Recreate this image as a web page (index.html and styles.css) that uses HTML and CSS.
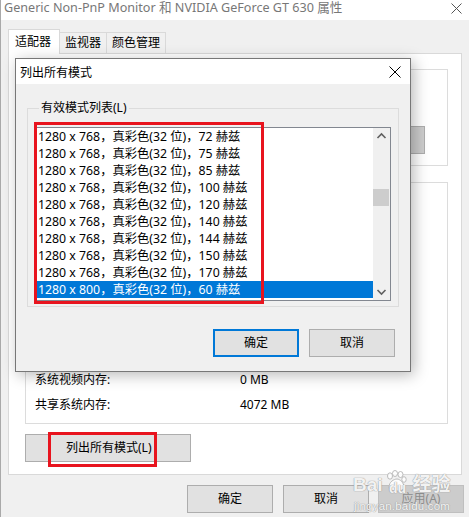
FILE: index.html
```html
<!DOCTYPE html>
<html lang="zh-CN">
<head>
<meta charset="utf-8">
<title>属性</title>
<link rel="stylesheet" href="styles.css">
</head>
<body>
<div class="window">
  <div class="titlebar">
    <span class="title">Generic Non-PnP Monitor 和 NVIDIA GeForce GT 630 属性</span>
    <svg class="close" width="11" height="11" viewBox="0 0 11 11"><path d="M0.5 0.5L10.5 10.5M10.5 0.5L0.5 10.5" stroke="#555" stroke-width="1" fill="none"/></svg>
  </div>
  <div class="tabs">
    <div class="tab active">适配器</div>
    <div class="tab">监视器</div>
    <div class="tab">颜色管理</div>
  </div>
  <div class="panel">
    <div class="group g1">
      <div class="btn small-btn"></div>
    </div>
    <div class="group g2">
      <div class="info-row"><span class="k">系统视频内存:</span><span class="v">0 MB</span></div>
      <div class="info-row"><span class="k">共享系统内存:</span><span class="v">4072 MB</span></div>
    </div>
    <div class="btn list-btn">列出所有模式(L)</div>
  </div>
  <div class="footer">
    <div class="btn">确定</div>
    <div class="btn">取消</div>
    <div class="btn disabled">应用(A)</div>
  </div>

  <div class="watermark">
    <div class="wm-top">Bai<span class="paw"><svg width="22" height="22" viewBox="0 0 22 22"><g fill="rgba(255,255,255,0.85)" stroke="#bbb" stroke-width="1"><ellipse cx="5" cy="6" rx="2.5" ry="3.2"/><ellipse cx="10" cy="3.5" rx="2.5" ry="3"/><ellipse cx="15.5" cy="4.5" rx="2.5" ry="3"/><ellipse cx="19" cy="9.5" rx="2.2" ry="2.8"/><path d="M4 17c0-5 5-8 8-8s7 4 7 8c0 3-3 4-7 4s-8-1-8-4z"/></g></svg><span class="du">du</span></span>经验</div>
    <div class="wm-bottom">jingyan.baidu.com</div>
  </div>

  <div class="dialog">
    <div class="dlg-title">
      <span>列出所有模式</span>
      <svg class="dlg-close" width="12" height="12" viewBox="0 0 12 12"><path d="M0.5 0.5L11.5 11.5M11.5 0.5L0.5 11.5" stroke="#000" stroke-width="1" fill="none"/></svg>
    </div>
    <div class="dlg-body">
      <fieldset class="fs">
        <legend>有效模式列表(L)</legend>
        <div class="listbox">
          <div class="rows">
            <div class="row">1280 x 768，真彩色(32 位)，72 赫兹</div>
            <div class="row">1280 x 768，真彩色(32 位)，75 赫兹</div>
            <div class="row">1280 x 768，真彩色(32 位)，85 赫兹</div>
            <div class="row">1280 x 768，真彩色(32 位)，100 赫兹</div>
            <div class="row">1280 x 768，真彩色(32 位)，120 赫兹</div>
            <div class="row">1280 x 768，真彩色(32 位)，140 赫兹</div>
            <div class="row">1280 x 768，真彩色(32 位)，144 赫兹</div>
            <div class="row">1280 x 768，真彩色(32 位)，150 赫兹</div>
            <div class="row">1280 x 768，真彩色(32 位)，170 赫兹</div>
            <div class="row selected">1280 x 800，真彩色(32 位)，60 赫兹</div>
          </div>
          <div class="scrollbar">
            <svg class="arrow" width="17" height="17" viewBox="0 0 17 17"><path d="M4.5 10L8.5 6L12.5 10" stroke="#606060" stroke-width="1.6" fill="none"/></svg>
            <div class="track"><div class="thumb"></div></div>
            <svg class="arrow" width="17" height="17" viewBox="0 0 17 17"><path d="M4.5 7L8.5 11L12.5 7" stroke="#606060" stroke-width="1.6" fill="none"/></svg>
          </div>
        </div>
      </fieldset>
      <div class="dlg-buttons">
        <div class="btn primary">确定</div>
        <div class="btn">取消</div>
      </div>
    </div>
  </div>

  <div class="mark mark-list"></div>
  <div class="mark mark-btn"></div>
</div>
</body>
</html>
```

FILE: styles.css
```css
* { box-sizing: border-box; }
html, body { margin: 0; padding: 0; }
body {
  background: #f0f0f0;
  font-family: "Noto Sans", "Noto Sans CJK SC", sans-serif;
  font-size: 12px;
  color: #000;
}
.window {
  position: relative;
  width: 469px;
  height: 517px;
  background: #f0f0f0;
  border-left: 1px solid #a9a9a9;
  overflow: hidden;
}
.titlebar {
  height: 20px;
  background: #fff;
  display: flex;
  align-items: center;
  justify-content: space-between;
  padding: 0 7px 0 3px;
}
.title {
  color: #777;
  font-size: 12.6px;
  line-height: 16px;
  margin-top: -4px;
}
.close { margin-top: -4px; }
.tabs {
  display: flex;
  align-items: flex-end;
  height: 24px;
  margin: 9px 0 0 7px;
  position: relative;
  z-index: 1;
}
.tab {
  height: 21px;
  line-height: 19px;
  border: 1px solid #d9d9d9;
  border-bottom: none;
  background: #f0f0f0;
  padding: 0 5px;
  margin-left: -1px;
}
.tab:first-child { margin-left: 0; }
.tab.active {
  height: 25px;
  line-height: 23px;
  background: #fff;
  margin-bottom: -1px;
  padding: 0 6px;
  width: 52px;
}
.panel {
  margin-left: 7px;
  width: 454px;
  height: 422px;
  background: #fff;
  border: 1px solid #d9d9d9;
  padding: 15px 13px 0 16px;
}
.group { border: 1px solid #dcdcdc; }
.g1 {
  height: 97px;
  display: flex;
  flex-direction: column;
  justify-content: flex-end;
  align-items: flex-end;
  padding: 0 22px 11px 0;
}
.g2 {
  height: 242px;
  margin-top: 16px;
  display: flex;
  flex-direction: column;
  justify-content: flex-end;
  gap: 9px;
  padding: 0 10px 10px 9px;
}
.info-row { display: flex; line-height: 16px; }
.info-row .k { width: 205px; }
.btn {
  height: 28px;
  width: 86px;
  border: 1px solid #adadad;
  background: #e1e1e1;
  display: flex;
  align-items: center;
  justify-content: center;
  line-height: 16px;
}
.small-btn { height: 28px; width: 86px; background: #cccccc; border-color: #adadad; }
.list-btn {
  width: 166px;
  margin-top: 10px;
  justify-content: flex-start;
  padding-left: 40px;
}
.footer {
  display: flex;
  justify-content: flex-end;
  gap: 9px;
  margin-top: 10px;
  padding-right: 5px;
}
.footer .btn:first-child { margin-right: 1px; }
.btn.disabled { background: #cccccc; border-color: #bfbfbf; color: #8c8c8c; }

/* watermark */
.watermark {
  position: absolute;
  left: 352px;
  top: 474px;
  color: rgba(255,255,255,0.9);
  text-shadow: 0 0 1px #999, 0 0 1px #999;
  font-family: "Liberation Sans", "Noto Sans CJK SC", sans-serif;
  z-index: 3;
}
.wm-top {
  font-size: 19px;
  font-weight: bold;
  line-height: 22px;
  display: flex;
  align-items: center;
}
.paw { position: relative; display: inline-flex; width: 30px; height: 22px; align-items: center; justify-content: center; }
.paw svg { position: absolute; left: 2px; top: -4px; }
.du { position: relative; font-size: 14px; margin-top: 6px; }
.wm-bottom {
  font-size: 11.5px;
  line-height: 14px;
  margin-top: 3px;
  padding-left: 1px;
  letter-spacing: 0.2px;
}

/* dialog */
.dialog {
  position: absolute;
  left: 14px;
  top: 58px;
  width: 396px;
  height: 314px;
  border: 1px solid #777;
  background: #f0f0f0;
  box-shadow: 3px 3px 14px rgba(0,0,0,0.28);
  z-index: 2;
}
.dlg-title {
  height: 25px;
  background: #fff;
  display: flex;
  align-items: center;
  justify-content: space-between;
  padding: 0 9px 0 4px;
}
.dlg-close { margin-top: 1px; }
.dlg-body { padding: 16px 11px 0 11px; }
.fs {
  margin: 0;
  height: 207px;
  border: 1px solid #dcdcdc;
  padding: 11px 7px 5px 7px;
}
.fs legend {
  padding: 0 2px;
  margin-left: 4px;
  line-height: 16px;
}
.listbox {
  height: 174px;
  border: 1px solid #828790;
  background: #fff;
  display: flex;
}
.rows { flex: 1; }
.row {
  height: 17px;
  line-height: 17px;
  padding-left: 2px;
  white-space: nowrap;
  font-size: 12.3px;
}
.row.selected { background: #0078d7; color: #fff; }
.scrollbar {
  width: 17px;
  background: #f0f0f0;
  display: flex;
  flex-direction: column;
}
.arrow { display: block; }
.track { flex: 1; padding-top: 44px; }
.thumb { height: 17px; margin: 0 1px 0 0; background: #cdcdcd; }
.dlg-buttons {
  display: flex;
  justify-content: flex-end;
  gap: 10px;
  margin-top: 22px;
  padding-right: 4px;
}
.btn.primary { border: 2px solid #0078d7; }

/* red annotation boxes */
.mark {
  position: absolute;
  border: 3px solid #e8141e;
  z-index: 4;
}
.mark-list { left: 33px; top: 122px; width: 230px; height: 182px; }
.mark-btn { left: 47px; top: 432px; width: 109px; height: 35px; }
```
